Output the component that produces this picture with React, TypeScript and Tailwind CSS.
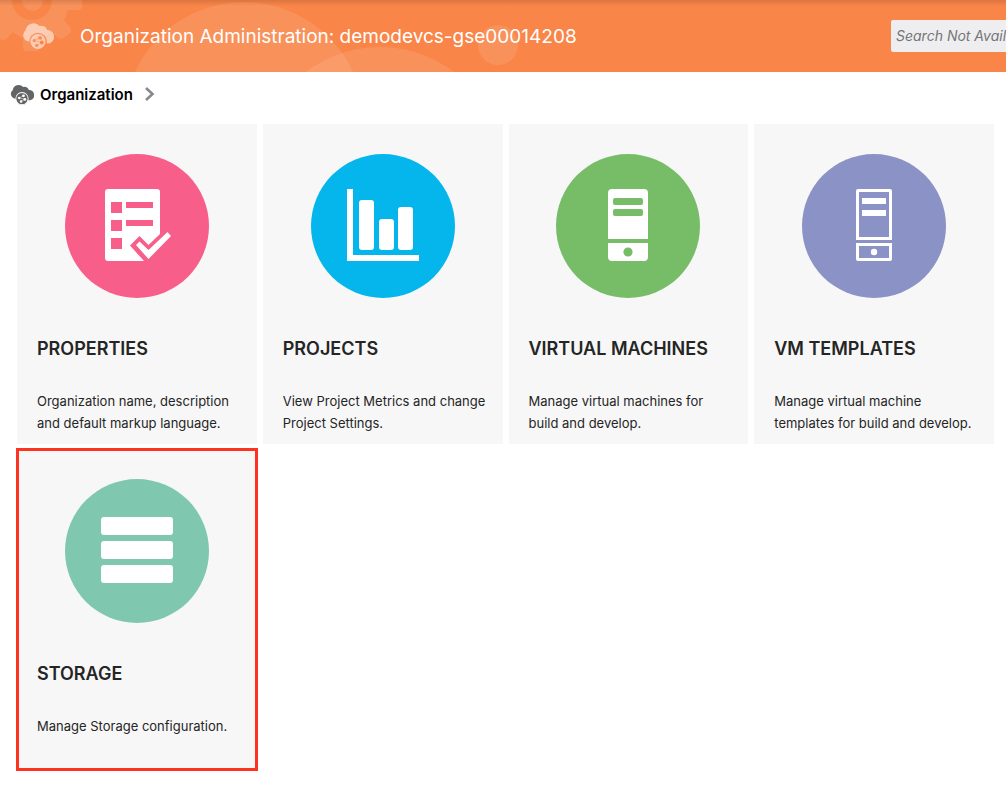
import { useId, type ReactNode } from "react";

function CloudIcon({ className }: { className: string }) {
  const maskId = useId();
  return (
    <svg viewBox="0 0 32 28" className={className} fill="currentColor" aria-hidden="true">
      <mask id={maskId}>
        <rect width="32" height="28" fill="white" />
        <circle cx="16" cy="19.5" r="8.8" fill="black" />
        <circle cx="16" cy="19.5" r="7.6" fill="white" />
        <g fill="black">
          <circle cx="18" cy="15.800" r="1.900" />
          <circle cx="12.200" cy="18.600" r="1.600" />
          <circle cx="19.800" cy="20.500" r="1.900" />
          <circle cx="14.800" cy="23.400" r="1.700" />
        </g>
        <path d="M12.200 18.600 L18 15.800 M12.200 18.600 L19.800 20.500 L14.800 23.400" fill="none" stroke="black" strokeWidth="0.600" />
      </mask>
      <path
        mask={`url(#${maskId})`}
        d="M7 19.5 A6.3 6.3 0 0 1 3.6 8.300 A8 8 0 0 1 17.500 4 A6 6 0 0 1 25.200 8 A6.8 6.8 0 0 1 26.500 21.500 H23.500 A7.6 7.6 0 0 1 8.500 21.500 Z"
      />
    </svg>
  );
}

function HeaderArt() {
  return (
    <svg
      viewBox="0 0 560 72"
      className="pointer-events-none absolute top-0 left-0 h-[72px] w-[560px]"
      fill="white"
      fillOpacity="0.1"
      aria-hidden="true"
    >
      <circle cx="244" cy="122" r="120" />
      <circle cx="380" cy="169" r="122" />
      <circle cx="498" cy="45" r="20" />
      <path
        fillRule="evenodd"
        d="M0 0 H82 V6 Q82 10 78 10 H68 Q66 16 64 20 L70 27 Q72 30 70 33 L64 38 Q61 40 58 38 L51 32 Q46 36 40 38 V47 Q40 51 36 51 H27 Q23 51 23 47 V38 Q18 36 13 32 L6 39 Q3 41 0 39 Z M12 0 A20 20 0 0 0 52 0 H43 A10.5 11 0 0 1 22 0 Z"
      />
    </svg>
  );
}

function Disc({ color, children }: { color: string; children: ReactNode }) {
  return (
    <svg viewBox="0 0 144 144" className={`size-36 ${color}`} fill="white" aria-hidden="true">
      <circle cx="72" cy="72" r="72" fill="currentColor" />
      {children}
    </svg>
  );
}

const cards = [
  {
    title: "Properties",
    text: "Organization name, description and default markup language.",
    icon: (
      <Disc color="text-[#f75f8a]">
        <path d="M43 35 H92 Q95 35 95 38 V80 L83.500 91 L74.500 82 L65 91.500 L79 107 H43 Q40 107 40 104 V38 Q40 35 43 35 Z" />
        <path
          fill="currentColor"
          d="M46 48 h11 v11 h-11 Z M46 66 h11 v11 h-11 Z M46 84 h11 v11 h-11 Z M61 48 h27 v6 h-27 Z M61 66 h27 v6 h-27 Z"
        />
        <path d="M71 91 L74.500 87.500 L83.500 96 L102.500 78 L106 82 L83.500 105 Z" />
      </Disc>
    ),
  },
  {
    title: "Projects",
    text: "View Project Metrics and change Project Settings.",
    icon: (
      <Disc color="text-[#04b6eb]">
        <path d="M36 35 h6 v66 h66 v6 h-72 Z" />
        <rect x="48" y="46" width="15" height="50" rx="3" />
        <rect x="68" y="65" width="15" height="31" rx="3" />
        <rect x="87" y="53" width="15" height="43" rx="3" />
      </Disc>
    ),
  },
  {
    title: "Virtual Machines",
    text: "Manage virtual machines for build and develop.",
    icon: (
      <Disc color="text-[#77bd68]">
        <path d="M52 85 V39 Q52 35 56 35 H88 Q92 35 92 39 V85 Z M52 89 H92 V103 Q92 107 88 107 H56 Q52 107 52 103 Z" />
        <rect x="57" y="44" width="30" height="7" rx="2" fill="currentColor" />
        <rect x="57" y="55" width="30" height="7" rx="2" fill="currentColor" />
        <circle cx="72" cy="98" r="4.600" fill="currentColor" />
      </Disc>
    ),
  },
  {
    title: "VM Templates",
    text: "Manage virtual machine templates for build and develop.",
    icon: (
      <Disc color="text-[#8b92c6]">
        <path
          fillRule="evenodd"
          d="M54 86 V37 Q54 35 56 35 H88 Q90 35 90 37 V86 Z M57 38 V83 H87 V38 Z M54 89 H90 V105 Q90 107 88 107 H56 Q54 107 54 105 Z M57 92 V104 H87 V92 Z"
        />
        <path d="M60 44 h24 v6 h-24 Z M60 56 h24 v6 h-24 Z" />
        <circle cx="72" cy="98" r="3.200" />
      </Disc>
    ),
  },
  {
    title: "Storage",
    text: "Manage Storage configuration.",
    selected: true,
    icon: (
      <Disc color="text-[#7fc8af]">
        <rect x="36" y="38" width="72" height="18" rx="3" />
        <rect x="36" y="62" width="72" height="18" rx="3" />
        <rect x="36" y="86" width="72" height="18" rx="3" />
      </Disc>
    ),
  },
];

export default function App() {
  return (
    <div className="min-h-screen bg-white font-['Inter',sans-serif] text-[#252525]">
      <header className="relative flex h-[72px] items-center overflow-hidden bg-[#f98548]">
        <HeaderArt />
        <div className="pointer-events-none absolute inset-x-0 top-0 h-1.5 bg-linear-to-b from-black/12 to-transparent" />
        <CloudIcon className="relative ml-[22px] h-7 w-8 text-white/55" />
        <h1 className="relative ml-[26px] flex-1 pt-0.5 text-[19px] leading-7 whitespace-nowrap text-white">
          Organization Administration: demodevcs-gse00014208
        </h1>
        <input
          type="text"
          aria-label="Search"
          disabled
          placeholder="Search Not Available"
          className="relative h-8 w-[115px] rounded-l-xs bg-[#eeeef0] pb-0.5 pl-[5px] text-[14px] italic placeholder:text-[#757575]"
        />
      </header>

      <nav aria-label="Breadcrumb" className="flex h-11 items-center pl-2.5">
        <CloudIcon className="h-[21px] w-6 text-[#636466]" />
        <a href="#organization" className="ml-1.5 pt-0.5 text-[15px] font-semibold text-black">
          Organization
        </a>
        <svg viewBox="0 0 10 14" className="ml-3 h-3.5 w-2.5" fill="none" stroke="#85898e" strokeWidth="2.6" aria-hidden="true">
          <path d="M1 1 L7.500 7 L1 13" />
        </svg>
      </nav>

      <main className="grid grid-cols-4 gap-x-1.5 gap-y-[5px] pt-2 pr-3 pb-4 pl-[17px]">
        {cards.map((card) => (
          <a
            key={card.title}
            href={`#${card.title.toLowerCase().replace(" ", "-")}`}
            className={`flex flex-col bg-[#f7f7f7] pt-[30px] pr-4 pb-2 pl-5 ${
              card.selected ? "min-h-[321px] outline-3 -outline-offset-2 outline-[#fb3320]" : "min-h-80"
            }`}
          >
            <span className="mr-1 self-center">{card.icon}</span>
            <h2 className="mt-[37px] text-[18px] leading-7 font-semibold whitespace-nowrap uppercase">{card.title}</h2>
            <p className="mt-[27px] text-[13px] leading-[22px]">{card.text}</p>
          </a>
        ))}
      </main>
    </div>
  );
}
